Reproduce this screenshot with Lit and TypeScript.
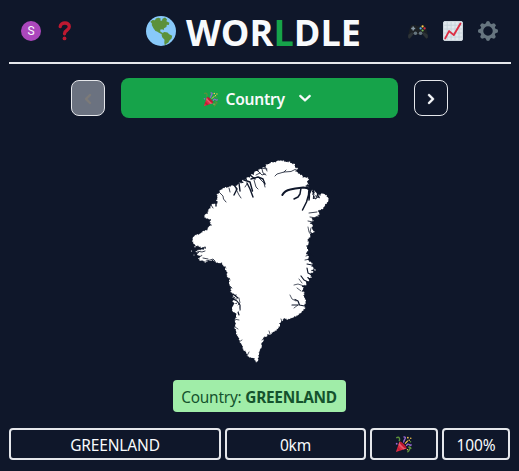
import { LitElement, html, css, svg } from "lit";
import { customElement } from "lit/decorators.js";

const popper = (size: number) => html`<svg width=${size} height=${size} viewBox="0 0 18 18">
  <path d="M4.7 6.2 1 17 12.2 13.2Z" fill="#dd2e44"/>
  <path d="M4.7 6.2 3.7 9.3 9 14.3 12.2 13.2Z" fill="#ea596e"/>
  <path d="M3 11.5 2.2 13.8 4.5 16 6.8 15.2Z" fill="#a0041e" opacity=".4"/>
  <ellipse cx="8.5" cy="9.6" rx="1.4" ry="4.9" transform="rotate(-45 8.5 9.6)" fill="#be1931"/>
  <path d="M1.3 1.9C4.8.2 5.4 3 4.4 5.5M13.1 17c3-1.4 1.5-3.6 3.8-4.6M14 12q3-1 2.7 1.6" fill="none" stroke="#5c913b" stroke-width="1.5"/>
  <path d="M9 1.1q3-.4 1.4 2.3T9.4 6.9M12 10.6q1.4-3 3-1.5t2.5-.2" fill="none" stroke="#9266cc" stroke-width="1.5"/>
  <path d="m10.6 8 3-3" stroke="#ffcc4d" stroke-width="1.2"/>
  <g fill="#ffcc4d"><circle cx="13.6" cy="1.8" r=".9"/><circle cx="16.7" cy="2.4" r=".8"/><circle cx="15" cy="4.4" r=".8"/><circle cx="13.2" cy="14.5" r=".7"/></g>
  <circle cx="1.8" cy="8.2" r="1" fill="#9266cc"/><circle cx="16.4" cy="6.2" r=".8" fill="#5c913b"/>
</svg>`;

const chevron = (d: string) => html`<svg width="20" height="20" viewBox="0 0 20 20" fill="currentColor" stroke="currentColor" stroke-width=".4"><path d=${d}/></svg>`;
const LEFT = "M12.707 5.293a1 1 0 010 1.414L9.414 10l3.293 3.293a1 1 0 01-1.414 1.414l-4-4a1 1 0 010-1.414l4-4a1 1 0 011.414 0z";
const RIGHT = "M7.293 14.707a1 1 0 010-1.414L10.586 10 7.293 6.707a1 1 0 011.414-1.414l4 4a1 1 0 010 1.414l-4 4a1 1 0 01-1.414 0z";
const DOWN = "M4.6 7.293a1 1 0 011.414 0L10 11l3.986-3.707a1 1 0 111.414 1.414l-4.7 4.4a1 1 0 01-1.414 0l-4.7-4.4a1 1 0 010-1.414z";

const globe = html`<svg width="30" height="30" viewBox="0 0 30 30">
  <circle cx="15" cy="15" r="15" fill="#88c9f9"/>
  <path d="M4.3 5.8 6.6 4 9 4.2 9.8 2.5 12.4 1.8 14.7 2.4 14.3 4.5 16 4.8 16.5 2.7 19 1.6 21 3.3 20.4 5.2 23.4 6.7 22.8 9 20.8 8.8 20.4 11 18 12.2 17.6 14.3 16.2 13.2 14.1 13.7 14.6 16 16.4 16.6 16 18.2 13.4 17 11 15.4 9.5 14.9 7.6 12.4 5.9 9.3 5.8 7.2Z" fill="#5c913b"/>
  <path d="M16 17.3 18.4 16 21.5 16.5 23.2 18.3 26.2 19.8 25.6 22.5 23.7 24.2 22.2 26.7 20.3 27.8 18.8 29.4 18.3 26.7 18.5 23.8 16.2 21.3 15.6 19Z" fill="#5c913b"/>
</svg>`;

const question = html`<svg width="14" height="20" viewBox="0 0 14 20">
  <path d="M2.2 5.6C2.6.9 11.3.6 11.3 5.8c0 3.9-4.8 3-4.8 7" fill="none" stroke="#be1931" stroke-width="3.3" stroke-linecap="round"/>
  <circle cx="6.5" cy="17.4" r="1.9" fill="#be1931"/>
</svg>`;

const gamepad = html`<svg width="20" height="20" viewBox="0 0 20 20">
  <path d="M3.3 4.3 7.7 4.1 8.6 5.3h2.8l.9-1.2 4.4.2 1.5 3L20 15.6q-.2 2.2-1.6 2.2-1.5-.6-3.5-4.1H5.1q-2 3.5-3.5 4.1Q.2 17.8 0 15.6L1.8 7.3Z" fill="#1c2024"/>
  <path d="M.5 13.5 4.5 11 5 13.8 1.6 17.6Q0 17.8.1 15.3ZM19.5 13.5 15.5 11 15 13.8l3.4 3.8q1.6.2 1.5-2.3Z" fill="#2d3338"/>
  <path d="M5.2 5.5v4M3.2 7.5h4" stroke="#8899a6" stroke-width="1.5"/>
  <circle cx="7.4" cy="12.3" r="1.8" fill="#66757f"/><circle cx="12.6" cy="12.3" r="1.8" fill="#66757f"/>
  <circle cx="14.6" cy="5.4" r="1.1" fill="#ffcc4d"/><circle cx="12.6" cy="7.4" r="1.1" fill="#55acee"/><circle cx="16.6" cy="7.4" r="1.1" fill="#dd2e44"/><circle cx="14.6" cy="9.5" r="1.1" fill="#77b255"/>
</svg>`;

const chart = html`<svg width="20" height="20" viewBox="0 0 20 20">
  <rect x=".3" y=".3" width="19.4" height="19.4" rx="1.6" fill="#e1e8ed"/>
  <path d="M1.2 4.2H19M1.2 8H19M1.2 12H19M1.2 16H19M4.2 1V19M8.1 1V19M12 1V19M16 1V19" stroke="#c2cfd8" stroke-width=".8"/>
  <rect x=".5" y=".5" width="19" height="19" rx="1.5" fill="none" stroke="#ccd6dd"/>
  <path d="M2.2 17.4 6.1 10.1 10.8 14.1 17.5 2.5" fill="none" stroke="#dd2e44" stroke-width="1.9" stroke-linecap="round" stroke-linejoin="round"/>
</svg>`;

const gear = html`<svg width="20" height="20" viewBox="-10 -10 20 20">
  <circle r="6.2" fill="none" stroke="#66757f" stroke-width="2.9"/>
  ${[0, 45, 90, 135, 180, 225, 270, 315].map(
    (a) => svg`<path d="M-2.6-6.8 -1.4-9.6Q0-10.4 1.4-9.6L2.6-6.8Z" fill="#66757f" transform="rotate(${a})"/>`
  )}
</svg>`;

const COAST =
  "M265 167 262 167.5 262 169 259 168.8 258 171 255 171 253.5 174 251 174 250 177 246 177.5 247 179.5 242 180 243 183 239 182.5 237 185.5 232 185.3 228 187.3 225 187 221.5 189.3 219 191 219 193 216.7 194 217.5 198 216 200 217.5 203.5 214 202.8 211 205 210 208 208 210 207.5 213 204.3 215 204.7 218 208 219 211 219.8 209.5 222 211 225 208 227 207.5 229.5 203 231 200 233.8 196 234.5 193 237 192 241 193.7 244 196 246 199 246.4 201 248 206 247.5 203 249.3 197 250 195 252 199 252.5 196.5 254.5 199 256 202 255.5 198 258.5 200 261 203 260.5 205 263 208 261 213 260.5 217 263 221.7 263.3 223 266 225 267 225 270 227 272 226.6 276 229 279 229 284 230.8 288 230.5 292 233 294 232.7 298 236 299 232 301 233.5 303 237 303.5 232 307 232.3 311 236 313.5 236 317 234.5 320 235.5 324 234.4 328 236 331 236 334 238.2 337 239.5 342 242 345 243 350 246 352 247 356 250 357.8 253.5 358 256 362.5 258 361.3 258.7 357 259.5 351 262 347 261.5 343 264 341 263.3 337.5 267 336.5 268 334.5 270.5 335 273 332 276 331 280 326 280 323 283 320.5 284 318 287 320 292 318 297 316 302 312 305.5 308 304 305 305.7 304 306 300 304 297 304.5 292 302 291 304 288 302 286 307 285 306 282 309.5 281 308 278 312 278 310 274 314 272 311 270 315 269.5 312 266 312.5 263 308 260 309 256 306 253 308.5 251 307 246 309 244 308 239 311 237 310 234 315 232 312 229 313 225 310 223 314 221 311.5 218.5 316 217 320 214 318 211 323 209 325 205.5 328 202 328.8 199 326.5 195 322 193 320 195 318 194 320 198.5 317.5 197 316 192 313 194 312.5 189 310 191 309 187 305 186 309 184.3 307 182 309.2 179 308 177.5 303 177 302 175 299 173.5 296 171 298.5 168 295 167.5 295 164 291 163 290 161.5 286 162 284 160.5 278 160.4 275 162 271 162 269 164 266 164Z";

const greenland = html`<svg class="shape" viewBox="185 155 150 214" width="150" height="214">
  <path d=${COAST} fill="#fff" />
  <path d=${COAST} fill="none" stroke="#0f172a" stroke-width="1.3" stroke-dasharray=".8 2.3 .6 3.1 1 1.7" />
  <g fill="none" stroke="#0f172a" stroke-linejoin="round" stroke-linecap="round">
    <path stroke-width="2" d="M282.3 195q2.5-4.5 8-5.5l5-1 8-1 6 1 1 3"/>
    <path stroke-width="1.5" d="M301 188l-1 6-2 3-4 2M309 188l-.5 7-2 7-4 8M307 187l3 5-1 8"/>
    <path stroke-width="1" d="M311 189l3 5-1 5 3-4M314 198l2 1 1-5M312 190l2-3"/>
    <path stroke-width="1.4" d="m244 180 6 2 2.5 9M251 179l7-2 5 2 2 5M234 185l3 4-3 6M239 183l1 8M247 183l3 6 3 8M250 175l5 4M216 202v4M214 203l3-1"/>
    <path stroke-width=".8" d="m275 176 2-2 7-2 7-.5 4-2 3 1M219 192l4 4 .5 3 2.5 3M254 180l2 7 2 2M259 178l5 5 1 4M247 184l-2 3M236 189l3 6 2 3M262 169l1 4 3 2M258 171l4 4 3-1M265 166l2 5M256 175l4-2M261 168l6 1M229 188l1 4M211 205l2 3M284 172l2-2"/>
    <path stroke-width=".8" d="M192 248l8 1 5-2M197 251l5 1 3-1M206 261l4-1 3-1 2 2M203 258l5 1M309 213l8-1M310 217l6 1M308 221l5 1M314 235l-4-3 1-4M308 241l4-3 1-4M306 256l5-2 2 2M305 260l5-1 3 3M307 247l3 3"/>
    <path stroke-width="1.2" d="m236 295-3 4 4 2 3 4v5M237 309l2 6M233 294l5 4M304.5 306l-5-1-1.5-4-3-1.5M298 305h-6M312 275l-4-2-1-5M312 265l-5-1M308 282l-4-2-3-4"/>
    <path stroke-width=".7" d="m239 298 1 5-4 4M234 319l5 1M235 327l3 2M239 342l3-2M247 356l2-4M296 301l-4-2-2-4M298 305l-4 3M301 291l-4-3M304 286l-6-2-4 1M302 283l-3-4M281 319l2 5M269 331l1 3M262 340l3-2M308 227l1 5 2 3-1 7-2 5 1 5M224 267l2 1M229 278l1 2M230 286l2 2"/>
  </g>
  <g fill="#fff"><path d="m310 193 1 6 2 1-1-5ZM314 190l2 7 1-3ZM234.5 303l4 3 1 4-3 3-3.5-1-1-4Z"/><circle cx="318" cy="216" r=".6"/><circle cx="315" cy="270" r=".7"/><circle cx="194" cy="255" r=".5"/><circle cx="191.5" cy="251" r=".6"/><circle cx="195" cy="246.7" r=".7"/></g>
</svg>`;

@customElement("app-root")
export class AppRoot extends LitElement {
  static styles = css`
    :host { display: block; box-sizing: border-box; height: 471px; padding: 0 8px 0 9px; background: #0f172a; color: #f8fafc; font: 16px/24px "Noto Sans", "Open Sans", sans-serif; overflow: hidden; }
    svg { display: block; flex: none; }
    header { display: flex; align-items: center; justify-content: space-between; height: 62px; border-bottom: 2px solid #e5e7eb; }
    .tools { display: flex; align-items: center; width: 103px; padding-left: 12px; box-sizing: border-box; gap: 17px; }
    .tools.right { width: 116px; padding: 0 13px 0 0; gap: 15px; justify-content: flex-end; }
    .avatar { width: 20px; height: 20px; border-radius: 50%; background: #ab47bc; font: 12px/20px Roboto, sans-serif; text-align: center; }
    .title { display: flex; align-items: center; gap: 10px; margin: 0; font: 700 36px/48px "Open Sans", sans-serif; }
    .word { width: 175px; white-space: nowrap; letter-spacing: .05px; padding-top: 4px; }
    .word span { color: #16a34a; }
    .rounds { display: flex; justify-content: center; align-items: center; gap: 16px; margin: 14px 1px 0 0; height: 40px; }
    button { font: inherit; color: inherit; padding: 0; display: flex; align-items: center; justify-content: center; box-sizing: border-box; }
    .step { width: 34px; height: 36px; border: 1px solid #e5e7eb; border-radius: 8px; background: none; }
    .step svg { margin-top: 2px; }
    .step.off { background: #6b7280; color: #7d7b78; }
    .pick { width: 277px; height: 40px; border: 0; border-radius: 8px; background: #16a34a; font-weight: 600; font-size: 15.6px; }
    .pick svg:first-child { margin-top: 2px; }
    .pick span { margin: 2px 10px 0 8px; width: 59px; white-space: nowrap; letter-spacing: -.25px; }
    .pick { padding-right: 2px; }
    .shape { margin: 37px auto 0 176px; }
    .answer { width: 173px; height: 32px; box-sizing: border-box; padding-right: 1px; margin: 11px 0 0 164px; border-radius: 4px; background: #a0eda8; color: #14532d; line-height: 36px; text-align: center; white-space: nowrap; letter-spacing: -.2px; font-size: 15.4px; }
    .answer b { font-weight: 700; letter-spacing: -.28px; }
    .guess { display: grid; grid-template-columns: 212px 141px 68px 68px; gap: 4px; margin-top: 16px; }
    .cell { height: 32px; box-sizing: border-box; border: 2px solid #e5e7eb; border-radius: 4px; display: flex; align-items: center; justify-content: center; padding-top: 2px; letter-spacing: -.15px; font-size: 15.5px; }
    .cell.icon { padding: 0 1px 0 0; }
  `;

  render() {
    return html`
      <header>
        <div class="tools"><div class="avatar">S</div>${question}</div>
        <h1 class="title">${globe}<div class="word">WOR<span>L</span>DLE</div></h1>
        <div class="tools right">${gamepad}${chart}${gear}</div>
      </header>
      <div class="rounds">
        <button class="step off" disabled>${chevron(LEFT)}</button>
        <button class="pick">${popper(15)}<span>Country</span>${chevron(DOWN)}</button>
        <button class="step">${chevron(RIGHT)}</button>
      </div>
      ${greenland}
      <div class="answer">Country: <b>GREENLAND</b></div>
      <div class="guess">
        <div class="cell">GREENLAND</div>
        <div class="cell">0km</div>
        <div class="cell icon">${popper(17)}</div>
        <div class="cell">100%</div>
      </div>
    `;
  }
}
